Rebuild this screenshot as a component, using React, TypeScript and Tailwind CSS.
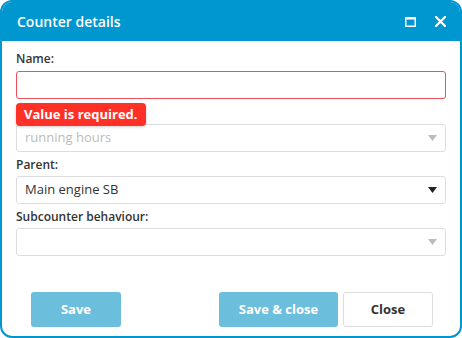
export default function App() {
  return (
    <div
      className="w-[462px] h-[338px] bg-white"
      style={{ fontFamily: '"Open Sans", "Liberation Sans", sans-serif' }}
    >
      <div className="flex flex-col h-[338px] rounded-[12px] border-2 border-[#0096d0] overflow-hidden bg-white">
        <div className="h-[39px] bg-[#0096d0] flex items-center pl-[15px] pr-[14px] shrink-0">
          <span className="text-white text-[14px] font-semibold flex-1">Counter details</span>
          <svg width="11" height="10" viewBox="0 0 11 10" className="mr-[19px]">
            <rect x="0.75" y="0.75" width="9.5" height="8.5" fill="none" stroke="white" strokeWidth="1.5" />
            <rect x="0" y="0" width="11" height="2.5" fill="white" />
          </svg>
          <svg width="11" height="11" viewBox="0 0 11 11">
            <path d="M1 1 L10 10 M10 1 L1 10" stroke="white" strokeWidth="2.2" strokeLinecap="round" />
          </svg>
        </div>
        <div className="flex flex-col flex-1 px-[14px] pt-[10px]">
          <label className="text-[12px] font-semibold text-[#333] leading-[16px]">Name:</label>
          <div className="mt-[4px] h-[28px] border border-[#f0505a] rounded-[3px]" />
          <div className="relative mt-[25px]">
            <span className="absolute left-0 top-[-21px] bg-[#ff3025] text-white text-[13px] font-bold rounded-[4px] px-[8px] h-[23px] leading-[23px] shadow-[0_1px_3px_rgba(0,0,0,0.2)]">
              Value is required.
            </span>
            <div className="h-[28px] border border-[#ddd] rounded-[3px] flex items-center pl-[8px] pr-[8px]">
              <span className="flex-1 text-[13px] text-[#bbb]">running hours</span>
              <svg width="9" height="6" viewBox="0 0 9 6"><path d="M0 0 H9 L4.5 6 Z" fill="#bbb" /></svg>
            </div>
          </div>
          <label className="mt-[5px] text-[12px] font-semibold text-[#333] leading-[16px]">Parent:</label>
          <div className="mt-[3px] h-[28px] border border-[#ddd] rounded-[3px] flex items-center pl-[8px] pr-[8px]">
            <span className="flex-1 text-[13px] text-[#333]">Main engine SB</span>
            <svg width="9" height="6" viewBox="0 0 9 6"><path d="M0 0 H9 L4.5 6 Z" fill="#222" /></svg>
          </div>
          <label className="mt-[5px] text-[12px] font-semibold text-[#333] leading-[16px]">Subcounter behaviour:</label>
          <div className="mt-[3px] h-[28px] border border-[#ddd] rounded-[3px] flex items-center justify-end pr-[8px]">
            <svg width="9" height="6" viewBox="0 0 9 6"><path d="M0 0 H9 L4.5 6 Z" fill="#bbb" /></svg>
          </div>
          <div className="mt-[36px] flex pl-[15px] pr-[13px]">
            <button className="w-[90px] h-[35px] rounded-[3px] bg-[#6cbedd] text-white text-[13px] font-bold">Save</button>
            <div className="flex-1" />
            <button className="w-[119px] h-[35px] rounded-[3px] bg-[#6cbedd] text-white text-[13px] font-bold">Save &amp; close</button>
            <button className="ml-[5px] w-[90px] h-[35px] rounded-[3px] border border-[#ddd] bg-white text-[#333] text-[13px] font-bold">Close</button>
          </div>
        </div>
      </div>
    </div>
  )
}
